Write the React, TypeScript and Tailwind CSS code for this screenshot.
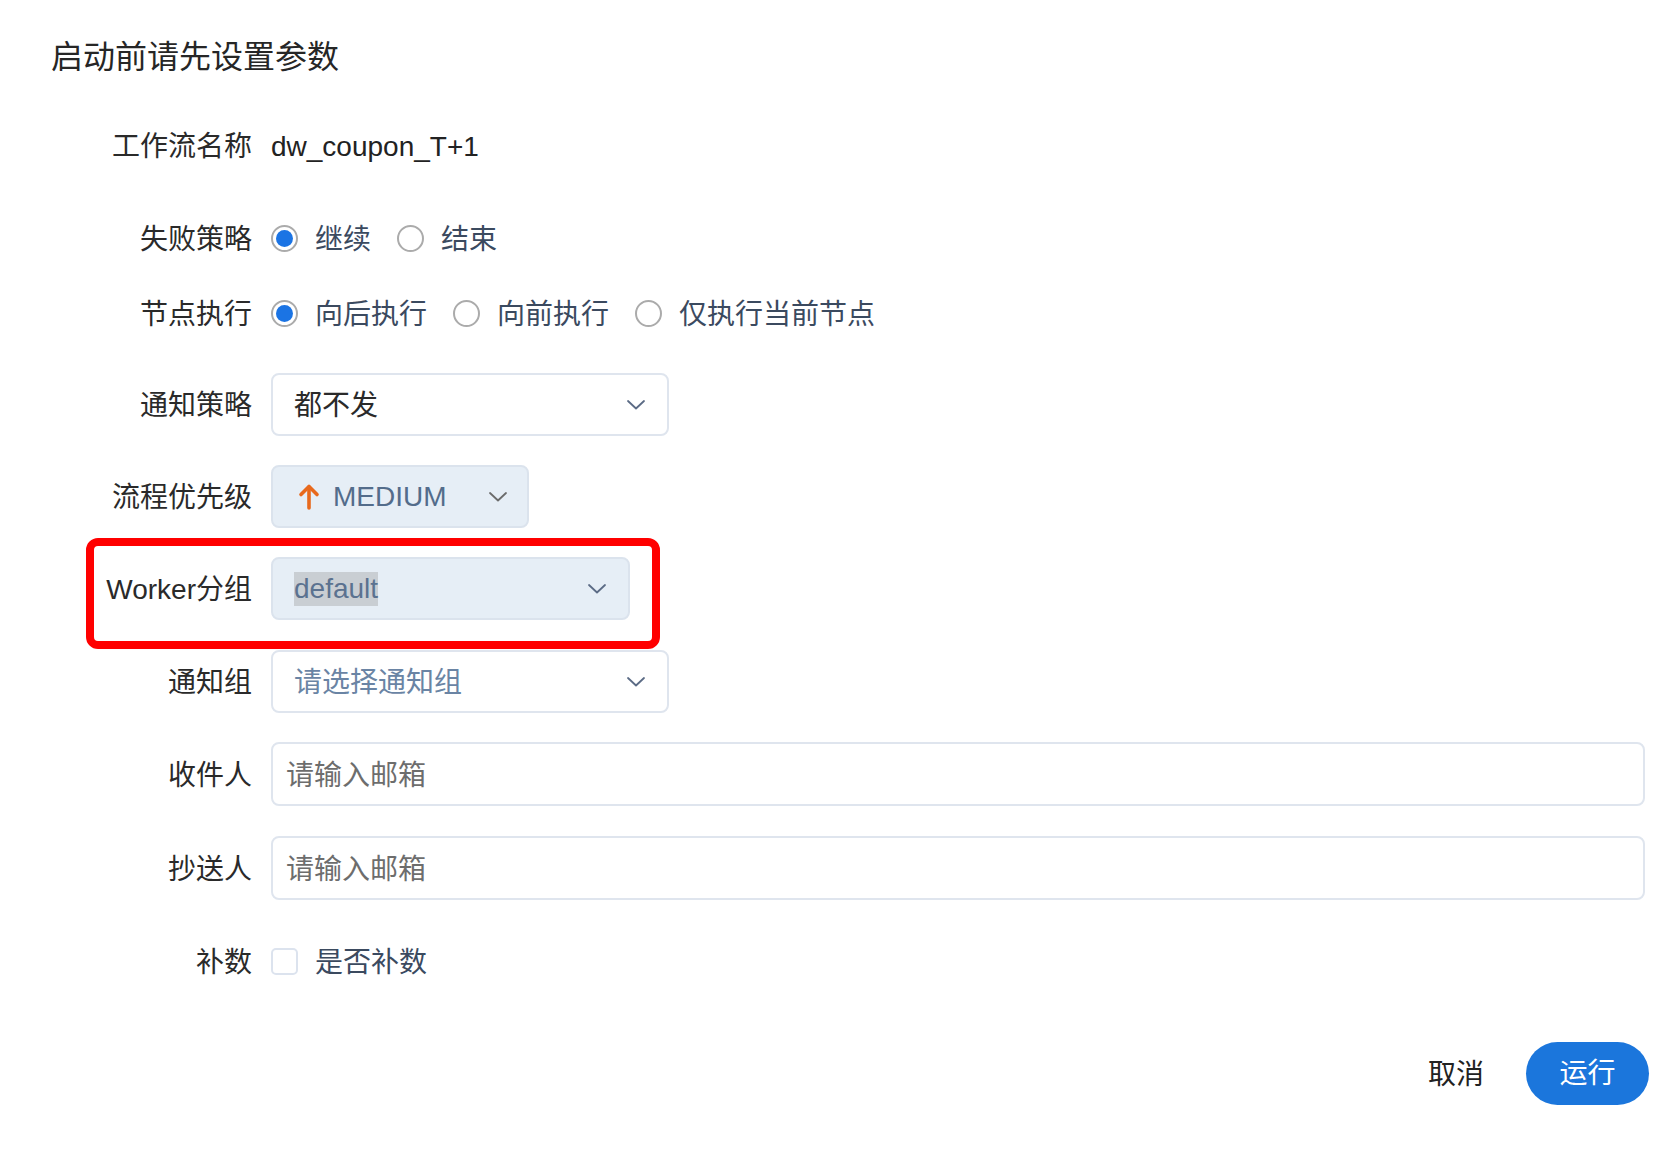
import React from 'react';

const FONT = '"Liberation Sans", "Noto Sans CJK SC", sans-serif';

function Chevron({ color = '#5b6b85' }: { color?: string }) {
  return (
    <svg width="18" height="10" viewBox="0 0 18 10" fill="none">
      <polyline points="1,1 9,8.5 17,1" stroke={color} strokeWidth="1.8" strokeLinecap="round" strokeLinejoin="round" />
    </svg>
  );
}

function Radio({ checked, label }: { checked?: boolean; label: string }) {
  return (
    <label className="flex items-center mr-[26px]">
      <span className="w-[27px] h-[27px] rounded-full border-2 border-[#ababab] bg-white flex items-center justify-center">
        {checked && <span className="w-[17px] h-[17px] rounded-full bg-[#1b74e4]" />}
      </span>
      <span className="ml-[17px] pt-[3px] text-[28px] leading-none text-[#3b4a5f]">{label}</span>
    </label>
  );
}

function Label({ children }: { children: React.ReactNode }) {
  return (
    <div className="w-[252px] shrink-0 pt-[3px] text-right text-[28px] leading-none text-[#2a2a2a]">{children}</div>
  );
}

export default function App() {
  return (
    <div className="w-full h-[1154px] bg-white overflow-hidden" style={{ fontFamily: FONT }}>
      {/* Title */}
      <div className="pt-[37px] pl-[51px] text-[32px] leading-[40px] text-[#262626]">启动前请先设置参数</div>

      {/* Form */}
      <div className="flex flex-col">
        <div className="mt-[36px] h-[64px] flex items-center">
          <Label>工作流名称</Label>
          <div className="ml-[19px] pt-[3px] text-[28px] leading-none text-[#222]">dw_coupon_T+1</div>
        </div>

        <div className="mt-[29px] h-[64px] flex items-center">
          <Label>失败策略</Label>
          <div className="ml-[19px] flex items-center">
            <Radio checked label="继续" />
            <Radio label="结束" />
          </div>
        </div>

        <div className="mt-[11px] h-[64px] flex items-center">
          <Label>节点执行</Label>
          <div className="ml-[19px] flex items-center">
            <Radio checked label="向后执行" />
            <Radio label="向前执行" />
            <Radio label="仅执行当前节点" />
          </div>
        </div>

        <div className="mt-[28px] h-[63px] flex items-center">
          <Label>通知策略</Label>
          <div className="ml-[19px] w-[398px] h-[63px] rounded-[8px] border-2 border-[#dfe5ee] bg-white flex items-center justify-between pl-[21px] pr-[22px]">
            <span className="pt-[3px] text-[28px] leading-none text-[#2a2a2a]">都不发</span>
            <Chevron />
          </div>
        </div>

        <div className="mt-[29px] h-[63px] flex items-center">
          <Label>流程优先级</Label>
          <div className="ml-[19px] w-[258px] h-[63px] rounded-[8px] border-2 border-[#dbe3ed] bg-[#e6eef6] flex items-center pl-[25px] pr-[20px]">
            <svg width="22" height="28" viewBox="0 0 22 28" fill="none">
              <line x1="11" y1="25" x2="11" y2="4" stroke="#e8691d" strokeWidth="3.6" strokeLinecap="round" />
              <polyline points="3,11.5 11,3.5 19,11.5" stroke="#e8691d" strokeWidth="3.6" strokeLinecap="round" strokeLinejoin="round" />
            </svg>
            <span className="ml-[13px] text-[28px] leading-none text-[#536c8b]">MEDIUM</span>
            <span className="ml-auto">
              <Chevron color="#6b6b6b" />
            </span>
          </div>
        </div>

        <div className="relative mt-[29px] h-[63px] flex items-center">
          <Label>Worker分组</Label>
          <div className="ml-[19px] w-[359px] h-[63px] rounded-[8px] border-2 border-[#dbe3ed] bg-[#e6eef6] flex items-center justify-between pl-[21px] pr-[22px]">
            <span className="text-[28px] leading-[34px] text-[#5b7290] bg-[#c9ced3]">default</span>
            <Chevron />
          </div>
          {/* annotation */}
          <div className="absolute left-[86px] top-[-19px] w-[574px] h-[111px] border-[8px] border-[#ff0000] rounded-[12px] pointer-events-none" />
        </div>

        <div className="mt-[30px] h-[63px] flex items-center">
          <Label>通知组</Label>
          <div className="ml-[19px] w-[398px] h-[63px] rounded-[8px] border-2 border-[#dfe5ee] bg-white flex items-center justify-between pl-[21px] pr-[22px]">
            <span className="pt-[3px] text-[28px] leading-none text-[#6a84a4]">请选择通知组</span>
            <Chevron />
          </div>
        </div>

        <div className="mt-[29px] h-[64px] flex items-center">
          <Label>收件人</Label>
          <div className="ml-[19px] w-[1374px] h-[64px] rounded-[8px] border-2 border-[#dfe5ee] bg-white flex items-center pl-[13px]">
            <span className="pt-[3px] text-[28px] leading-none text-[#6d6d6d]">请输入邮箱</span>
          </div>
        </div>

        <div className="mt-[30px] h-[64px] flex items-center">
          <Label>抄送人</Label>
          <div className="ml-[19px] w-[1374px] h-[64px] rounded-[8px] border-2 border-[#dfe5ee] bg-white flex items-center pl-[13px]">
            <span className="pt-[3px] text-[28px] leading-none text-[#6d6d6d]">请输入邮箱</span>
          </div>
        </div>

        <div className="mt-[29px] h-[64px] flex items-center">
          <Label>补数</Label>
          <div className="ml-[19px] flex items-center">
            <span className="w-[27px] h-[27px] rounded-[5px] border-2 border-[#dce3ee] bg-white" />
            <span className="ml-[17px] pt-[3px] text-[28px] leading-none text-[#3b4a5f]">是否补数</span>
          </div>
        </div>
      </div>

      {/* Footer */}
      <div className="mt-[49px] flex items-center justify-end pr-[13px]">
        <button className="pt-[3px] text-[28px] leading-none text-[#222]">取消</button>
        <button className="ml-[42px] w-[123px] h-[63px] rounded-full bg-[#1b76dc] text-white text-[28px] leading-none">运行</button>
      </div>
    </div>
  );
}
